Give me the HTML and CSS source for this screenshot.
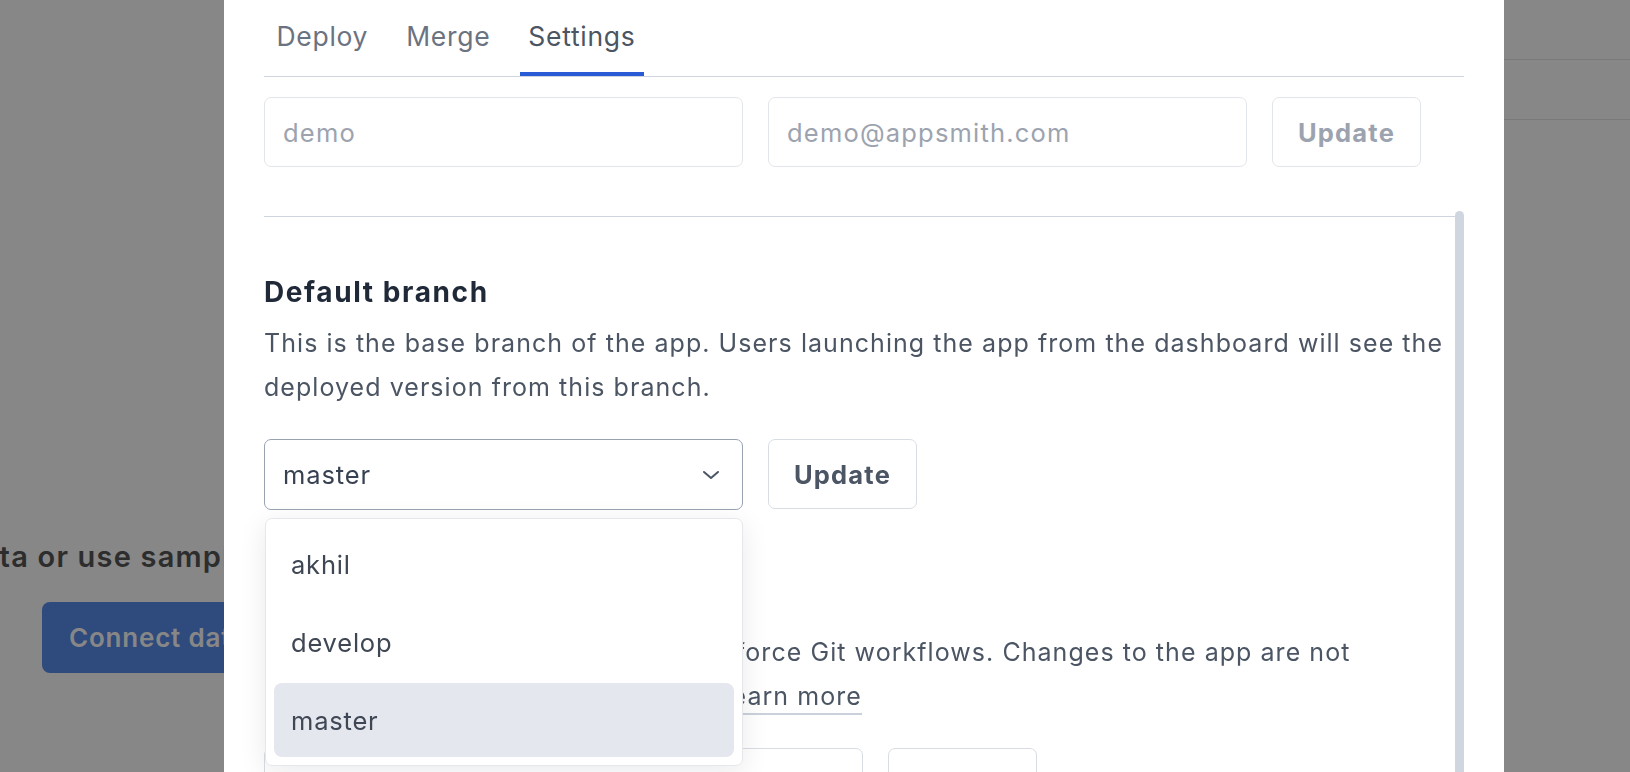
FILE: index.html
```html
<!DOCTYPE html>
<html lang="en">
<head>
<meta charset="utf-8">
<title>Git settings</title>
<link rel="stylesheet" href="styles.css">
</head>
<body>
<div class="page">
  <main class="canvas">
    <div class="empty">
      <p class="empty-title">Connect your data or use sample data</p>
      <button class="connect" type="button">Connect data</button>
    </div>
  </main>
  <aside class="side">
    <div class="side-row"></div>
    <div class="side-row"></div>
  </aside>
</div>

<div class="overlay">
  <div class="modal">
    <nav class="tabs">
      <span class="tab">Deploy</span>
      <span class="tab">Merge</span>
      <span class="tab active">Settings</span>
    </nav>

    <div class="user-row">
      <input class="field" type="text" placeholder="demo">
      <input class="field" type="text" placeholder="demo@appsmith.com">
      <button class="btn" type="button" disabled>Update</button>
    </div>

    <div class="scroll">
      <div class="thumb"></div>

      <section class="sec">
        <h2 class="sec-title">Default branch</h2>
        <p class="sec-text">This is the base branch of the app. Users launching the app from the dashboard will see the deployed version from this branch.</p>
        <div class="ctrl-row">
          <div class="select-wrap">
            <div class="select open">
              <span>master</span>
              <svg class="chev" width="18" height="10" viewBox="0 0 18 10"><path d="M2 2 L9 8 L16 2" fill="none" stroke="#4b5563" stroke-width="2" stroke-linecap="round" stroke-linejoin="round"/></svg>
            </div>
            <ul class="menu">
              <li class="item">akhil</li>
              <li class="item">develop</li>
              <li class="item selected">master</li>
            </ul>
          </div>
          <button class="btn strong" type="button">Update</button>
        </div>
      </section>

      <section class="sec sec2">
        <h2 class="sec-title">Branch protection</h2>
        <p class="sec-text">Protected branches enable you to enforce Git workflows. Changes to the app are not allowed in the protected branches. <a class="link" href="#">Learn more</a></p>
        <div class="ctrl-row">
          <div class="select wide">
            <span>Select branches</span>
          </div>
          <button class="btn strong" type="button">Update</button>
        </div>
      </section>
    </div>
  </div>
</div>
</body>
</html>
```

FILE: styles.css
```css
* { box-sizing: border-box; }

html, body {
  margin: 0;
  padding: 0;
  height: 100%;
  overflow: hidden;
  font-family: Inter, "Noto Sans", "Liberation Sans", sans-serif;
  background: #ffffff;
}

/* background application */
.page {
  display: flex;
  height: 772px;
  background: #ffffff;
}

.canvas {
  flex: 1;
  padding-top: 539px;
}

.empty {
  margin-left: -250px;
}

.empty-title {
  margin: 0;
  font-size: 29px;
  font-weight: 600;
  letter-spacing: 1.2px;
  line-height: 36px;
  color: #555555;
  white-space: nowrap;
}

.connect {
  margin: 27px 0 0 292px;
  height: 71px;
  padding: 0 27px;
  border: 0;
  border-radius: 8px;
  background: #598cea;
  color: #ffffff;
  font-family: inherit;
  font-size: 26px;
  font-weight: 600;
  letter-spacing: 0.8px;
  white-space: nowrap;
}

.side {
  width: 126px;
}

.side-row {
  height: 60px;
  border-bottom: 1px solid #e4e4e4;
}

/* dialog */
.overlay {
  position: fixed;
  inset: 0;
  background: rgba(0, 0, 0, 0.47);
  padding-left: 224px;
}

.modal {
  width: 1280px;
  height: 100%;
  background: #ffffff;
  padding: 0 40px;
}

.tabs {
  display: flex;
  gap: 21px;
  height: 77px;
  padding-left: 4px;
  border-bottom: 1px solid #cfd5df;
}

.tab {
  display: flex;
  align-items: center;
  padding: 0 8.5px;
  height: 76px;
  border-bottom: 4px solid transparent;
  font-size: 26.5px;
  letter-spacing: 0.7px;
  color: #6b7280;
}

.tab.active {
  color: #4b5563;
  border-bottom-color: #2a5bd7;
}

.user-row {
  display: flex;
  gap: 25px;
  margin-top: 20px;
}

.field {
  width: 479px;
  height: 70px;
  border: 1px solid #e2e6ec;
  border-radius: 7px;
  padding: 0 18px;
  font-family: inherit;
  font-size: 25.5px;
  letter-spacing: 1.2px;
  color: #374151;
  outline: none;
}
.field::placeholder { color: #9ca3af; }

.btn {
  width: 149px;
  height: 70px;
  border: 1px solid #e2e6ec;
  border-radius: 7px;
  background: #ffffff;
  font-family: inherit;
  font-size: 25.5px;
  font-weight: 700;
  letter-spacing: 1.2px;
  color: #9ca3af;
}

.btn.strong {
  color: #4b5563;
  border-color: #d8dde4;
}

.scroll {
  position: relative;
  margin-top: 49px;
  border-top: 1px solid #cfd5df;
  padding-right: 12px;
}

.thumb {
  position: absolute;
  right: 0;
  top: -6px;
  width: 9px;
  height: 700px;
  border-radius: 5px;
  background: #cfd6e0;
}

.sec {
  padding-top: 57px;
}

.sec2 {
  padding-top: 73px;
}

.sec-title {
  margin: 0;
  font-size: 28px;
  line-height: 36px;
  font-weight: 700;
  letter-spacing: 1.6px;
  color: #1f2937;
}

.sec-text {
  margin: 11px 0 0;
  font-size: 25px;
  line-height: 44px;
  letter-spacing: 1.05px;
  color: #4b5563;
}

.link {
  color: #4b5563;
  text-decoration: none;
  border-bottom: 2px solid #cbd1db;
  padding-bottom: 2px;
}

.ctrl-row {
  display: flex;
  gap: 25px;
  margin-top: 30px;
}

.select-wrap {
  position: relative;
}

.select {
  width: 479px;
  height: 71px;
  display: flex;
  align-items: center;
  justify-content: space-between;
  padding: 0 22px 0 18px;
  border: 1px solid #e2e6ec;
  border-radius: 7px;
  font-size: 25.5px;
  letter-spacing: 0.9px;
  color: #374151;
}

.select.open {
  border-color: #98a2b1;
}

.select.wide {
  width: 599px;
  border-color: #d8dde4;
  color: #9ca3af;
}

.menu {
  position: absolute;
  top: 79px;
  left: 1px;
  width: 478px;
  margin: 0;
  padding: 8px;
  list-style: none;
  background: #ffffff;
  border: 1px solid #e5e7eb;
  border-radius: 7px;
  box-shadow: 0 6px 28px rgba(15, 23, 42, 0.09);
  display: flex;
  flex-direction: column;
  gap: 4px;
  z-index: 2;
}

.item {
  height: 74px;
  display: flex;
  align-items: center;
  padding-left: 17px;
  border-radius: 8px;
  font-size: 25.5px;
  letter-spacing: 0.8px;
  color: #3f4654;
}

.item.selected {
  background: #e4e7ee;
}
```
